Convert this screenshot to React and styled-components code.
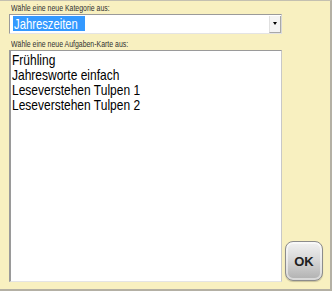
import React from 'react';
import styled, { createGlobalStyle } from 'styled-components';

const GlobalStyle = createGlobalStyle`
    html, body {
        margin: 0;
        padding: 0;
        background: #f8f0c0;
    }
`;

const Frame = styled.div`
    box-sizing: border-box;
    width: 332px;
    height: 291px;
    background: #f8f0c0;
    border-top: 1px solid #c4c0b0;
    border-right: 2px solid #b4b0a4;
    border-bottom: 2px solid #b4b0a4;
    display: flex;
    flex-direction: row;
    align-items: stretch;
    padding: 3px 0 7px 9px;
    font-family: "Liberation Sans", Arial, sans-serif;
`;

const MainColumn = styled.div`
    width: 273px;
    display: flex;
    flex-direction: column;
`;

const SideColumn = styled.div`
    flex: 1;
    display: flex;
    flex-direction: column;
    justify-content: flex-end;
    align-items: flex-start;
    padding-left: 3px;
    padding-bottom: 1px;
`;

/* the original UI uses a narrow face; emulate it by squeezing the text horizontally */
const Narrow = styled.span`
    display: inline-block;
    white-space: nowrap;
    transform: scaleX(${(p) => p.scale || 0.8});
    transform-origin: left center;
`;

const Label = styled.div`
    font-size: 9px;
    line-height: 9px;
    color: #303030;
    padding-left: 2px;
    margin-top: ${(p) => p.top || 0}px;
    margin-bottom: 1px;
    height: 9px;
`;

const SelectBox = styled.div`
    box-sizing: border-box;
    height: 20px;
    background: #fff;
    border-top: 1px solid #9a9a9a;
    border-left: 1px solid #9a9a9a;
    border-right: 1px solid #d8d8d8;
    border-bottom: 1px solid #e4e4e4;
    display: flex;
    align-items: center;
    padding-left: 3px;
`;

const SelectedText = styled.div`
    flex: 1;
    font-size: 15px;
    line-height: 15px;
`;

const Highlight = styled.span`
    display: inline-block;
    width: 71px;
    height: 15px;
    background: #3399ff;
    color: #fff;
    padding-left: 1px;
    overflow: hidden;
`;

const ArrowButton = styled.div`
    box-sizing: border-box;
    width: 12px;
    height: 17px;
    background: #f4f4f4;
    border-left: 1px solid #e0e0e0;
    border-right: 1px solid #a8a8a8;
    border-bottom: 1px solid #a8a8a8;
    display: flex;
    align-items: center;
    justify-content: center;
`;

const Triangle = styled.div`
    width: 0;
    height: 0;
    border-left: 2.5px solid transparent;
    border-right: 2.5px solid transparent;
    border-top: 3px solid #000;
`;

const ListBox = styled.div`
    box-sizing: border-box;
    flex: 1;
    background: #fff;
    border-top: 1px solid #9a9a9a;
    border-left: 2px solid #9a9a9a;
    border-right: 1px solid #c8c8c8;
    border-bottom: 1px solid #e4e4e4;
    padding: 1px 0 0 1px;
`;

const ListItem = styled.div`
    font-size: 15px;
    line-height: 15px;
    height: 15px;
    color: #000;
`;

const OkButton = styled.button`
    box-sizing: border-box;
    width: 38px;
    height: 40px;
    border-radius: 8px;
    border: 1px solid #8c8c8c;
    background: linear-gradient(180deg, #f2f2f2 0%, #d8d8d8 45%, #b0b0b0 100%);
    box-shadow: inset 0 0 0 2px rgba(255, 255, 255, 0.5), 0 1px 1px rgba(0, 0, 0, 0.2);
    font-family: "Liberation Sans", Arial, sans-serif;
    font-weight: bold;
    font-size: 13px;
    color: #202020;
    padding: 0;
`;

const items = ['Frühling', 'Jahresworte einfach', 'Leseverstehen Tulpen 1', 'Leseverstehen Tulpen 2'];

export default function App() {
    return (
        <>
            <GlobalStyle />
            <Frame>
                <MainColumn>
                    <Label><Narrow scale={0.77}>Wähle eine neue Kategorie aus:</Narrow></Label>
                    <SelectBox>
                        <SelectedText>
                            <Highlight><Narrow scale={0.75}>Jahreszeiten</Narrow></Highlight>
                        </SelectedText>
                        <ArrowButton><Triangle /></ArrowButton>
                    </SelectBox>
                    <Label top={6}><Narrow scale={0.77}>Wähle eine neue Aufgaben-Karte aus:</Narrow></Label>
                    <ListBox>
                        {items.map((item) => (
                            <ListItem key={item}><Narrow>{item}</Narrow></ListItem>
                        ))}
                    </ListBox>
                </MainColumn>
                <SideColumn>
                    <OkButton>OK</OkButton>
                </SideColumn>
            </Frame>
        </>
    );
}
